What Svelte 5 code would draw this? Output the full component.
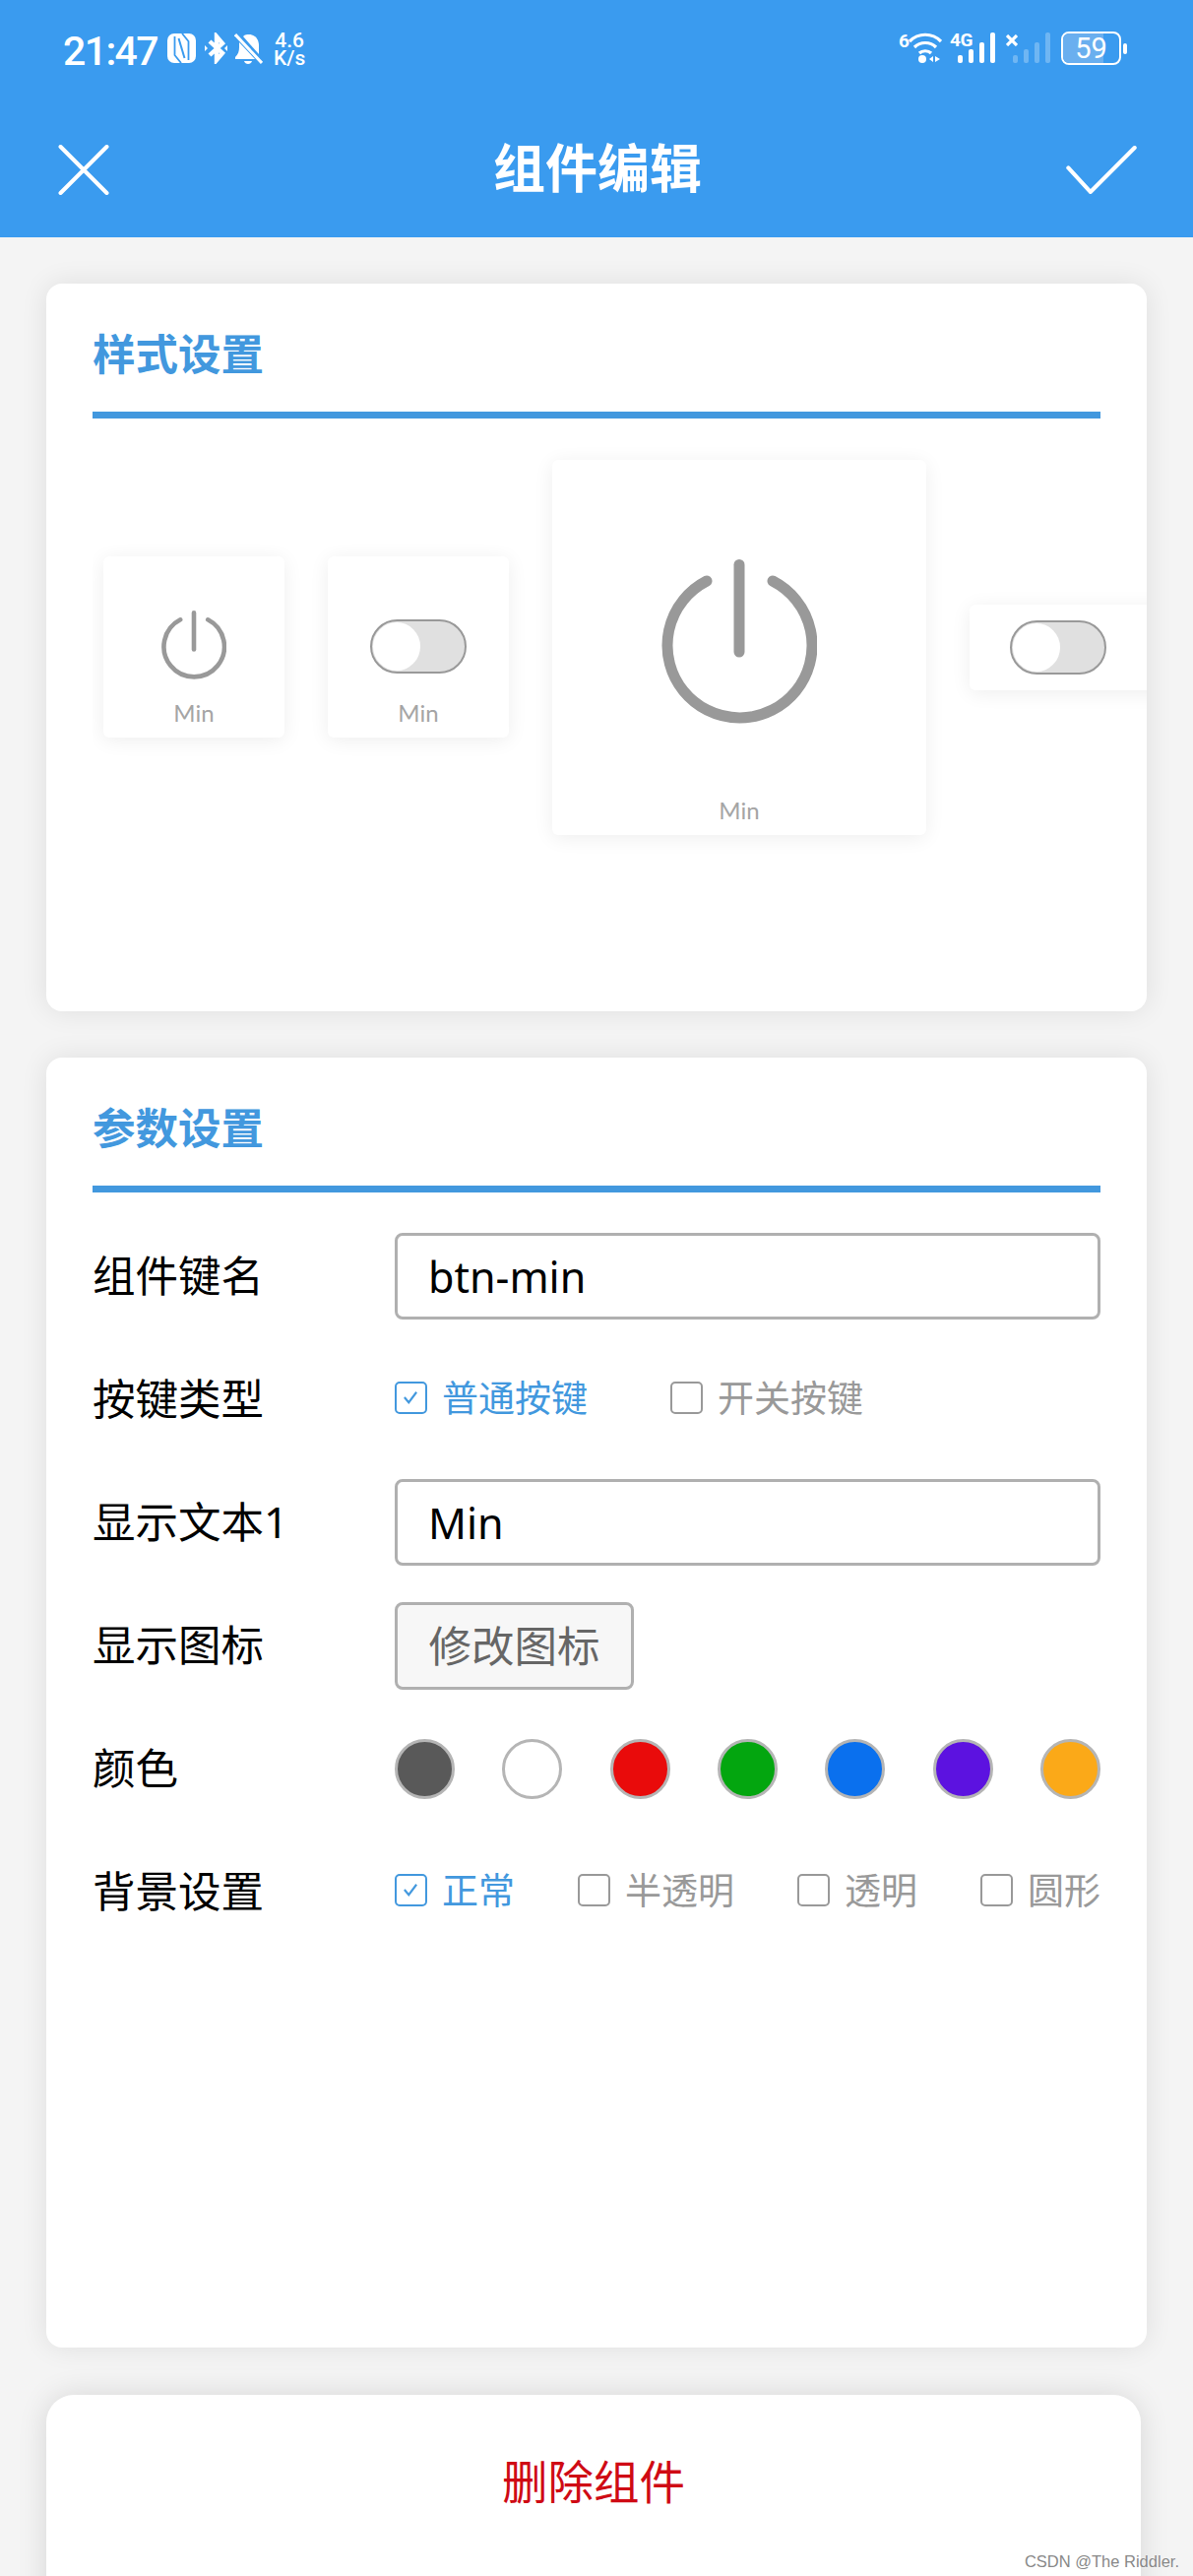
<script>
  const swatches = ['#595959', '#ffffff', '#e90b0b', '#03a60f', '#0a70ee', '#5c12e0', '#fba918'];
  const keyTypes = [
    { label: '普通按键', checked: true },
    { label: '开关按键', checked: false }
  ];
  const backgrounds = [
    { label: '正常', checked: true },
    { label: '半透明', checked: false },
    { label: '透明', checked: false },
    { label: '圆形', checked: false }
  ];
  const bars = [8, 14, 21, 31];
</script>

{#snippet power(cls)}
  <svg class={cls} viewBox="0 0 158 167" fill="none" stroke="#999" stroke-width="11" stroke-linecap="round">
    <path d="M46 22A73.5 73.5 0 1 0 113 22" />
    <path d="M79 5.5V94" />
  </svg>
{/snippet}

{#snippet toggle()}
  <span class="switch"><span class="knob"></span></span>
{/snippet}

{#snippet check(item)}
  <span class="check" class:on={item.checked}>
    <span class="box">
      {#if item.checked}
        <svg viewBox="0 0 32 32" fill="none" stroke="#4298de" stroke-width="2.4"><path d="M9 16l5 6 9-12" /></svg>
      {/if}
    </span>
    {item.label}
  </span>
{/snippet}

<div class="page">
  <header class="top">
    <div class="status">
      <div class="status-left">
        <span class="time">21:47</span>
        <!-- nfc -->
        <svg class="ic-nfc" viewBox="0 0 29 30">
          <rect width="29" height="30" rx="7" fill="#fff" />
          <path d="M7.5 3V22L14 30M21.5 27V8L15 0" stroke="#3a9bef" stroke-width="1.8" fill="none" />
          <path d="M11.5 5L17.5 25" stroke="#3a9bef" stroke-width="2" fill="none" />
        </svg>
        <!-- bluetooth -->
        <svg class="ic-bt" viewBox="0 0 23 32" fill="none" stroke="#fff" stroke-width="4.4">
          <path d="M5 9l13 12-6 7V19M5 23L18 11l-6-7v9" />
          <path d="M0 13l3 3-3 3zM23 13l-3 3 3 3z" fill="#fff" stroke="none" />
        </svg>
        <!-- bell off -->
        <svg class="ic-bell" viewBox="0 0 29 32">
          <path d="M5 9L21 26H1V24C4 21 5 18 5 14z" fill="#fff" />
          <path d="M9 3C11 1 13 1 15 1C21 1 25 6 25 12V21z" fill="#fff" />
          <path d="M10 28h8c-1 4-7 4-8 0z" fill="#fff" />
          <path d="M1 1L28 30" stroke="#fff" stroke-width="3" />
        </svg>
        <span class="speed"><span>4.6</span><span>K/s</span></span>
      </div>
      <div class="status-right">
        <span class="wifi">
          <span class="wifi-gen">6</span>
          <svg class="ic-wifi" viewBox="0 0 34 32" fill="none" stroke="#fff" stroke-width="3.2">
            <path d="M1 9c9-9 23-9 32 0M6 15c6-6 16-6 22 0M11 21c3-3 9-3 12 0" />
            <circle cx="14" cy="27" r="4" fill="#fff" stroke="none" />
            <path d="M21 27l4-3v6zM27 24v6l5-3z" fill="#fff" stroke="none" />
          </svg>
        </span>
        <span class="cell">
          <span class="cell-tag">4G</span>
          <span class="bars">
            {#each bars as h}
              <i style="height: {h}px"></i>
            {/each}
          </span>
        </span>
        <span class="cell off">
          <svg class="cell-x" viewBox="0 0 12 12" stroke="#fff" stroke-width="3.2"><path d="M1 1l10 10M11 1L1 11" /></svg>
          <span class="bars">
            {#each bars as h}
              <i style="height: {h}px"></i>
            {/each}
          </span>
        </span>
        <span class="battery"><span class="fill"></span><b>59</b></span>
        <span class="tip"></span>
      </div>
    </div>
    <div class="nav">
      <svg class="ic-close" viewBox="0 0 50 50" stroke="#fff" stroke-width="4" stroke-linecap="round"><path d="M2 2l46 46M48 2L2 48" /></svg>
      <h1>组件编辑</h1>
      <svg class="ic-ok" viewBox="0 0 70 48" fill="none" stroke="#fff" stroke-width="4" stroke-linecap="round" stroke-linejoin="round"><path d="M2 22l22 24L68 2" /></svg>
    </div>
  </header>

  <section class="card style-card">
    <h2>样式设置</h2>
    <div class="strip">
      <div class="tile small">
        {@render power('pw-small')}
        <span class="min">Min</span>
      </div>
      <div class="tile small with-switch">
        {@render toggle()}
        <span class="min">Min</span>
      </div>
      <div class="tile large">
        {@render power('pw-large')}
        <span class="min">Min</span>
      </div>
      <div class="tile wide">
        {@render toggle()}
      </div>
    </div>
  </section>

  <section class="card param-card">
    <h2>参数设置</h2>
    <div class="form">
      <div class="row">
        <span class="label">组件键名</span>
        <input class="field" value="btn-min" readonly />
      </div>
      <div class="row">
        <span class="label">按键类型</span>
        <div class="checks type">
          {#each keyTypes as item}
            {@render check(item)}
          {/each}
        </div>
      </div>
      <div class="row">
        <span class="label">显示文本1</span>
        <input class="field" value="Min" readonly />
      </div>
      <div class="row">
        <span class="label">显示图标</span>
        <button class="change">修改图标</button>
      </div>
      <div class="row">
        <span class="label">颜色</span>
        <div class="colors">
          {#each swatches as c}
            <span class="dot" style="background: {c}"></span>
          {/each}
        </div>
      </div>
      <div class="row">
        <span class="label">背景设置</span>
        <div class="checks">
          {#each backgrounds as item}
            {@render check(item)}
          {/each}
        </div>
      </div>
    </div>
  </section>

  <section class="card delete-card">
    <span>删除组件</span>
  </section>

  <span class="watermark">CSDN @The Riddler.</span>
</div>

<style>
  :global(body) {
    margin: 0;
  }

  .page {
    position: relative;
    width: 1212px;
    height: 2616px;
    overflow: hidden;
    background: #f4f4f4;
    font-family: "Noto Sans", "Noto Sans CJK SC", sans-serif;
    color: #000;
  }

  .top {
    height: 241px;
    background: #3a9bef;
    color: #fff;
  }

  .status {
    height: 100px;
    display: flex;
    justify-content: space-between;
    padding: 0 67px 0 64px;
    box-sizing: border-box;
  }

  .status-left,
  .status-right {
    display: flex;
    align-items: flex-start;
    padding-top: 33px;
  }

  .time {
    font: 500 41px/36px Roboto, sans-serif;
    letter-spacing: -1.6px;
    width: 106px;
    margin-top: 1px;
  }

  .ic-nfc {
    width: 29px;
    height: 30px;
    margin: 1px 9px 0 0;
  }

  .ic-bt {
    width: 23px;
    height: 32px;
    margin-right: 7px;
  }

  .ic-bell {
    width: 29px;
    height: 32px;
    margin: 1px 11px 0 0;
  }

  .speed {
    display: flex;
    flex-direction: column;
    font: 500 21px/18px Roboto, sans-serif;
    margin-top: -1px;
    align-items: center;
  }

  .wifi {
    position: relative;
    display: flex;
    width: 44px;
    margin-right: 8px;
  }

  .wifi-gen {
    font: 700 19px/26px Roboto, sans-serif;
    width: 10px;
    margin-top: -4px;
  }

  .ic-wifi {
    width: 34px;
    height: 32px;
  }

  .cell {
    position: relative;
    width: 46px;
    height: 32px;
    margin-right: 10px;
  }

  .cell.off {
    margin-right: 11px;
  }

  .cell-tag {
    position: absolute;
    left: 0;
    top: 0;
    font: 700 19px/16px Roboto, sans-serif;
    letter-spacing: -0.5px;
  }

  .cell-x {
    position: absolute;
    left: 1px;
    top: 2px;
    width: 12px;
    height: 12px;
  }

  .bars {
    position: absolute;
    right: 0;
    bottom: 1px;
    display: flex;
    align-items: flex-end;
    gap: 6px;
  }

  .bars i {
    width: 5px;
    border-radius: 2px;
    background: #fff;
  }

  .cell.off .bars i {
    background: #6fb6f3;
  }

  .battery {
    position: relative;
    width: 61px;
    height: 34px;
    margin-top: -1px;
    box-sizing: border-box;
    border: 2px solid #fff;
    border-radius: 8px;
    overflow: hidden;
    text-align: center;
  }

  .fill {
    position: absolute;
    left: 0;
    top: 0;
    bottom: 0;
    width: 72%;
    background: #6aafef;
  }

  .battery b {
    position: relative;
    font: 400 29px/30px Roboto, sans-serif;
  }

  .tip {
    width: 4px;
    height: 11px;
    margin: 11px 0 0 2px;
    border-radius: 2px;
    background: #fff;
  }

  .nav {
    height: 141px;
    display: grid;
    grid-template-columns: 1fr auto 1fr;
    align-items: start;
    padding: 47px 57px 0 59px;
    box-sizing: border-box;
  }

  .nav h1 {
    margin: 0;
    font-size: 53px;
    line-height: 48px;
    font-weight: 700;
  }

  .ic-close {
    width: 52px;
    height: 51px;
  }

  .ic-ok {
    justify-self: end;
    width: 72px;
    height: 49px;
    margin-top: 1px;
  }

  .card {
    background: #fff;
    border-radius: 16px;
    box-shadow: 0 0 28px rgba(0, 0, 0, 0.09);
    margin: 47px 47px 0;
    padding: 0 47px;
  }

  h2 {
    margin: 0;
    padding: 39px 0 27px;
    font-size: 43.5px;
    line-height: 64px;
    font-weight: 700;
    color: #4298de;
    border-bottom: 7px solid #4298de;
  }

  .style-card {
    height: 739px;
    box-sizing: border-box;
  }

  .strip {
    display: flex;
    align-items: center;
    gap: 44px;
    height: 464px;
    margin-right: -47px;
    padding-left: 11px;
    overflow: hidden;
    border-radius: 0 0 16px 0;
  }

  .tile {
    flex-shrink: 0;
    display: flex;
    flex-direction: column;
    align-items: center;
    box-sizing: border-box;
    background: #fff;
    border-radius: 6px;
    box-shadow: 0 3px 20px rgba(0, 0, 0, 0.07);
  }

  .small {
    width: 184px;
    height: 184px;
    padding-top: 55px;
  }

  .with-switch {
    padding-top: 64px;
  }

  .large {
    width: 380px;
    height: 381px;
    padding-top: 101px;
  }

  .wide {
    width: 215px;
    height: 87px;
    padding: 16px 35px 0 0;
  }

  .pw-small {
    width: 66px;
    height: 70px;
  }

  .pw-large {
    width: 158px;
    height: 167px;
  }

  .min {
    margin-top: auto;
    margin-bottom: 10px;
    font: 400 24px/30px Lato, sans-serif;
    color: #a5a5a5;
  }

  .switch {
    position: relative;
    display: block;
    width: 98px;
    height: 55px;
    box-sizing: border-box;
    border: 2px solid #999;
    border-radius: 28px;
    background: #e0e0e0;
  }

  .knob {
    position: absolute;
    left: 1px;
    top: 1px;
    width: 48px;
    height: 49px;
    border-radius: 50%;
    background: #fff;
  }

  .param-card {
    height: 1310px;
    box-sizing: border-box;
  }

  .form {
    display: flex;
    flex-direction: column;
    gap: 37px;
    padding-top: 41px;
  }

  .row {
    display: flex;
    align-items: center;
    height: 88px;
  }

  .label {
    width: 307px;
    flex-shrink: 0;
    padding-bottom: 3px;
    font-size: 43.5px;
    line-height: 60px;
  }

  .field {
    flex: 1;
    min-width: 0;
    height: 88px;
    box-sizing: border-box;
    padding: 0 31px;
    border: 3px solid #b0b0b0;
    border-radius: 8px;
    outline: none;
    background: #fff;
    font: 400 43px "Noto Sans", sans-serif;
    color: #000;
  }

  .change {
    width: 243px;
    height: 89px;
    padding: 0 0 3px;
    border: 3px solid #b0b0b0;
    border-radius: 8px;
    background: #f7f7f7;
    font: 400 43.5px "Noto Sans CJK SC", sans-serif;
    color: #666;
  }

  .checks {
    flex: 1;
    display: flex;
    justify-content: space-between;
    padding-bottom: 3px;
  }

  .checks.type {
    justify-content: flex-start;
    gap: 84px;
  }

  .check {
    display: flex;
    align-items: center;
    gap: 15px;
    font-size: 37px;
    line-height: 50px;
    color: #999;
  }

  .check.on {
    color: #4298de;
  }

  .box {
    width: 33px;
    height: 33px;
    box-sizing: border-box;
    border: 2.5px solid #999;
    border-radius: 5px;
    display: block;
  }

  .on .box {
    border-color: #4298de;
  }

  .box svg {
    display: block;
    width: 28px;
    height: 28px;
  }

  .colors {
    flex: 1;
    display: flex;
    justify-content: space-between;
  }

  .dot {
    width: 61px;
    height: 61px;
    box-sizing: border-box;
    border: 3px solid #b5b5b5;
    border-radius: 50%;
  }

  .delete-card {
    width: 1112px;
    height: 300px;
    box-sizing: border-box;
    margin-top: 48px;
    margin-right: 0;
    padding-top: 54px;
    border-radius: 28px 28px 0 0;
    text-align: center;
    font-size: 46.5px;
    line-height: 68px;
    color: #cf0a14;
    box-shadow: 0 0 30px rgba(0, 0, 0, 0.12);
  }

  .watermark {
    position: absolute;
    right: 14px;
    bottom: 5px;
    font: 400 16.5px/20px "Liberation Sans", sans-serif;
    color: #888;
    text-shadow: 0 0 2px #fff;
  }
</style>
